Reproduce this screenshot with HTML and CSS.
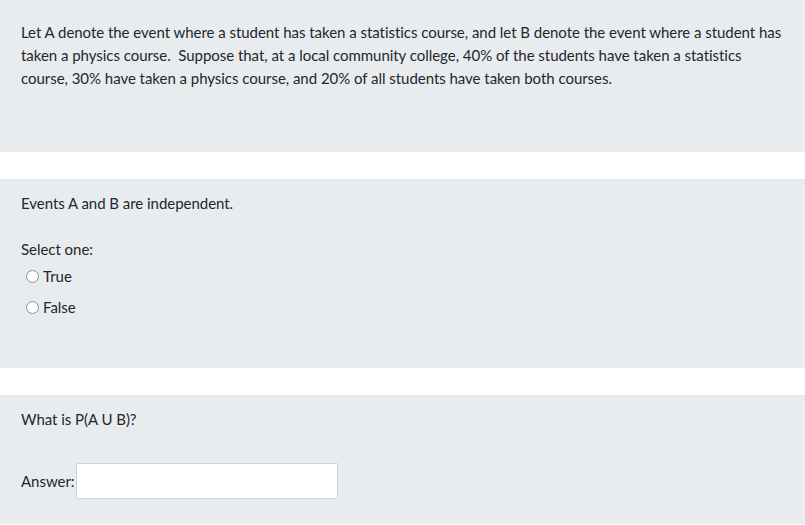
FILE: index.html
```html
<!DOCTYPE html>
<html lang="en">
<head>
<meta charset="utf-8">
<title>Quiz</title>
<link rel="stylesheet" href="styles.css">
</head>
<body>
<div class="page">
  <section class="panel panel-intro">
    <p class="text">Let A denote the event where a student has taken a statistics course, and let B denote the event where a student has taken a physics course.&nbsp; Suppose that, at a local community college, 40% of the students have taken a statistics course, 30% have taken a physics course, and 20% of all students have taken both courses.</p>
  </section>
  <section class="panel panel-tf">
    <p class="text">Events A and B are independent.</p>
    <p class="text prompt">Select one:</p>
    <div class="options">
      <label class="option"><span class="radio"></span><span>True</span></label>
      <label class="option"><span class="radio"></span><span>False</span></label>
    </div>
  </section>
  <section class="panel panel-answer">
    <p class="text">What is P(A U B)?</p>
    <div class="answer-row">
      <span class="text">Answer:</span>
      <span class="input"></span>
    </div>
  </section>
</div>
</body>
</html>
```
FILE: styles.css
```css
html, body {
  margin: 0;
  padding: 0;
  background: #ffffff;
}
body {
  font-family: Lato, "Noto Sans", sans-serif;
  font-size: 15px;
  letter-spacing: -0.035px;
  color: #23272b;
  line-height: 23px;
}
.page {
  display: flex;
  flex-direction: column;
  gap: 27px;
}
.panel {
  background: #e9ecef;
  padding: 0 21px;
}
.text {
  margin: 0;
}
.panel-intro {
  height: 152px;
  box-sizing: border-box;
  padding-top: 21px;
}
.panel-tf {
  height: 189px;
  box-sizing: border-box;
  padding-top: 13px;
}
.prompt {
  margin-top: 23px;
}
.options {
  display: flex;
  flex-direction: column;
}
.option {
  display: flex;
  align-items: center;
  height: 31px;
  padding-left: 5px;
  gap: 4px;
}
.radio {
  width: 13px;
  height: 13px;
  box-sizing: border-box;
  border: 1.5px solid #8a8f96;
  border-radius: 50%;
  background: #ffffff;
}
.panel-answer {
  height: 129px;
  box-sizing: border-box;
  padding-top: 13px;
}
.answer-row {
  display: flex;
  align-items: center;
  gap: 1px;
  margin-top: 32px;
}
.input {
  display: block;
  width: 262px;
  height: 36px;
  box-sizing: border-box;
  background: #ffffff;
  border: 1px solid #ced4da;
  border-radius: 1px;
}
```
